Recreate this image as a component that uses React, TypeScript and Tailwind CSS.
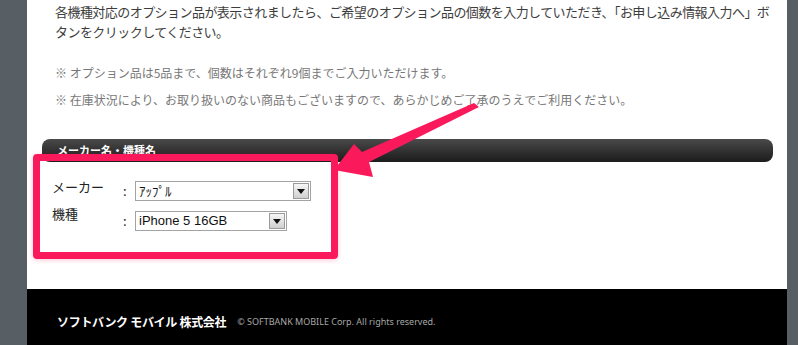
import React from "react";

const jp = { fontFamily: '"Noto Sans CJK JP", "Noto Sans", sans-serif' };

function FakeSelect({ width, value, latin }: { width: string; value: string; latin?: boolean }) {
  return (
    <div className={`${width} h-[20px] border border-[#a3a3a3] bg-white flex items-center justify-between pl-[3px] pr-[1px]`}>
      <span
        className="text-[13px] leading-[18px] text-[#111]"
        style={latin ? { fontFamily: '"Liberation Sans", Arial, sans-serif' } : jp}
      >
        {value}
      </span>
      <div className="w-[16px] h-[16px] border border-[#9a9a9a] bg-gradient-to-b from-[#f6f6f6] to-[#cfcfcf] flex items-center justify-center">
        <svg width="8" height="5" viewBox="0 0 8 5">
          <polygon points="0,0 8,0 4,5" fill="#111" />
        </svg>
      </div>
    </div>
  );
}

export default function App() {
  return (
    <div className="relative flex w-[798px] h-[345px] overflow-hidden bg-[#575e64]" style={jp}>
      <div className="w-[27px] shrink-0" />
      <div className="w-[760px] shrink-0 bg-white flex flex-col">
        <div className="pl-[28px] pt-[2px] text-[13px] leading-[20px] text-[#3d3d3d] tracking-[-0.55px] whitespace-nowrap">
          各機種対応のオプション品が表示されましたら、ご希望のオプション品の個数を入力していただき、「お申し込み情報入力へ」ボ
          <br />
          タンをクリックしてください。
        </div>
        <div className="pl-[28px] mt-[17px] text-[12px] leading-[27px] text-[#777]">
          <div>※ オプション品は5品まで、個数はそれぞれ9個までご入力いただけます。</div>
          <div>※ 在庫状況により、お取り扱いのない商品もございますので、あらかじめご了承のうえでご利用ください。</div>
        </div>
        <div className="ml-[15px] mr-[14px] mt-[26px] h-[23px] rounded-[8px] bg-gradient-to-b from-[#4a4a4a] to-[#1c1c1c] flex items-center pl-[15px]">
          <span className="text-[11px] font-bold text-white leading-none">メーカー名・機種名</span>
        </div>
        <div className="mt-[19px] flex flex-col gap-[10px] pl-[25px]">
          <div className="flex items-start">
            <span className="w-[71px] text-[13px] leading-[12px] text-[#222]">メーカー</span>
            <span className="w-[12px] text-[13px] leading-[20px] text-[#222]">:</span>
            <FakeSelect width="w-[176px]" value="ｱｯﾌﾟﾙ" />
          </div>
          <div className="flex items-start">
            <span className="w-[71px] text-[13px] leading-[13px] -mt-[4px] text-[#222]">機種</span>
            <span className="w-[12px] text-[13px] leading-[20px] text-[#222]">:</span>
            <FakeSelect width="w-[152px]" value="iPhone 5 16GB" latin />
          </div>
        </div>
        <div className="flex-1" />
        <div className="h-[56px] bg-black flex items-center pl-[30px] gap-[11px] pt-[9px]">
          <span className="text-[12px] font-bold text-white tracking-[-0.3px]">ソフトバンク モバイル 株式会社</span>
          <span className="text-[9px] text-[#a8a8a8]" style={{ fontFamily: '"Noto Sans", sans-serif' }}>
            © SOFTBANK MOBILE Corp. All rights reserved.
          </span>
        </div>
      </div>
      <div className="flex-1" />

      {/* annotation box */}
      <div className="absolute left-[33px] top-[154px] w-[305px] h-[105px] border-[7px] border-[#fa1a5c] rounded-[4px] shadow-[0_1px_5px_rgba(250,26,92,0.25)] pointer-events-none" />
      {/* annotation arrow */}
      <svg className="absolute left-0 top-0 pointer-events-none" width="798" height="345">
        <polygon
          points="334,170 354,144 362,152 474,103 479,107 369,162 373,177"
          fill="#fa1a5c"
        />
      </svg>
    </div>
  );
}
